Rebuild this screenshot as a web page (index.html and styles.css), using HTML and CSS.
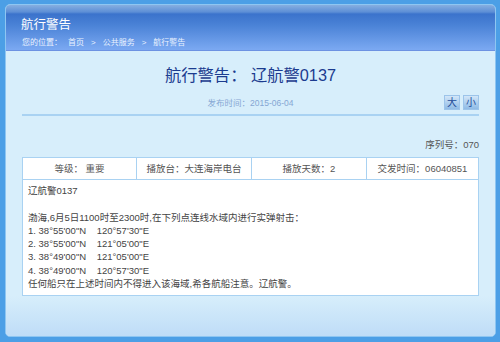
FILE: index.html
```html
<!DOCTYPE html>
<html lang="zh-CN">
<head>
<meta charset="utf-8">
<title>航行警告</title>
<link rel="stylesheet" href="styles.css">
</head>
<body>
<div class="panel">
  <div class="header">
    <div class="header-title">航行警告</div>
    <div class="crumbs">
      <span>您的位置：</span>
      <span class="crumb">首页</span>
      <span class="sep">&gt;</span>
      <span>公共服务</span>
      <span class="sep">&gt;</span>
      <span>航行警告</span>
    </div>
  </div>
  <div class="content">
    <h1 class="title">航行警告： 辽航警0137</h1>
    <div class="meta-row">
      <div class="date">发布时间：2015-06-04</div>
      <div class="sizes">
        <span class="size-btn">大</span>
        <span class="size-btn">小</span>
      </div>
    </div>
    <div class="serial">序列号：070</div>
    <div class="table">
      <div class="row head">
        <div class="cell">等级： 重要</div>
        <div class="cell">播放台：大连海岸电台</div>
        <div class="cell">播放天数：2</div>
        <div class="cell">交发时间：06040851</div>
      </div>
      <div class="body-cell">
        <p>辽航警0137</p>
        <p>&nbsp;</p>
        <p>渤海,6月5日1100时至2300时,在下列点连线水域内进行实弹射击：</p>
        <p>1. 38°55'00"N&nbsp;&nbsp;&nbsp;&nbsp;120°57'30"E</p>
        <p>2. 38°55'00"N&nbsp;&nbsp;&nbsp;&nbsp;121°05'00"E</p>
        <p>3. 38°49'00"N&nbsp;&nbsp;&nbsp;&nbsp;121°05'00"E</p>
        <p>4. 38°49'00"N&nbsp;&nbsp;&nbsp;&nbsp;120°57'30"E</p>
        <p>任何船只在上述时间内不得进入该海域,希各航船注意。辽航警。</p>
      </div>
    </div>
  </div>
</div>
</body>
</html>
```

FILE: styles.css
```css
html, body {
  margin: 0;
  padding: 0;
}
body {
  width: 500px;
  height: 342px;
  overflow: hidden;
  background: #4c9fe6;
  padding-top: 4px;
  box-sizing: border-box;
  font-family: "Liberation Sans", "Noto Sans CJK SC", sans-serif;
}
.panel {
  margin: 0 4px 0 5px;
  height: 333px;
  box-sizing: border-box;
  border: 1px solid #8ec6f2;
  border-radius: 5px;
  overflow: hidden;
  display: flex;
  flex-direction: column;
  background: #d7eefb;
}
.header {
  height: 45px;
  border-bottom: 1px solid #6d92e2;
  background: linear-gradient(to bottom, #86aee0 0px, #5d8fd6 7px, #3b73cc 9px, #4a82d6 20px, #7ba9f2 45px);
  padding-left: 15px;
  color: #fff;
}
.header-title {
  font-size: 12.5px;
  line-height: 16px;
  margin-top: 12px;
}
.crumbs {
  margin-top: 5px;
  font-size: 8px;
  line-height: 10px;
  color: #eaf2ff;
  display: flex;
  padding-left: 1px;
}
.crumb { margin-left: 6px; }
.sep { margin: 0 7px; }
.content {
  flex: 1;
  padding: 0 16px;
  background: linear-gradient(to bottom, #d7eefb 0px, #d7eefb 245px, #bedcf7 286px);
}
.title {
  margin: 14px 0 0;
  font-size: 16.3px;
  line-height: 20px;
  font-weight: normal;
  color: #1b3b8f;
  text-align: center;
}
.meta-row {
  margin-top: 10px;
  display: grid;
  grid-template-columns: 1fr auto 1fr;
  align-items: center;
  height: 15px;
  padding-bottom: 4px;
  border-bottom: 2px solid #a9d2f2;
}
.date {
  grid-column: 2;
  font-size: 8.5px;
  color: #86a7d3;
  line-height: 12px;
}
.sizes {
  grid-column: 3;
  justify-self: end;
  display: flex;
  gap: 3px;
}
.size-btn {
  width: 16px;
  height: 15px;
  box-sizing: border-box;
  border: 1px solid #9cc4ea;
  background: linear-gradient(to bottom, #d2e6f8, #8fbbe6);
  color: #244c99;
  font-size: 10px;
  line-height: 13px;
  text-align: center;
}
.serial {
  margin-top: 23px;
  font-size: 9.5px;
  line-height: 12px;
  color: #555;
  text-align: right;
}
.table {
  margin-top: 6px;
  border: 1px solid #a9d2f2;
  background: #fff;
}
.row {
  display: grid;
  grid-template-columns: 113px 115px 115px 1fr;
  border-bottom: 1px solid #a9d2f2;
}
.cell {
  height: 21px;
  line-height: 21px;
  font-size: 9.5px;
  color: #555;
  text-align: center;
  border-left: 1px solid #a9d2f2;
}
.cell:first-child { border-left: none; }
.body-cell {
  padding: 4px 5px 5px;
  font-size: 9.5px;
  line-height: 13.3px;
  color: #444;
}
.body-cell p {
  margin: 0;
}
```
